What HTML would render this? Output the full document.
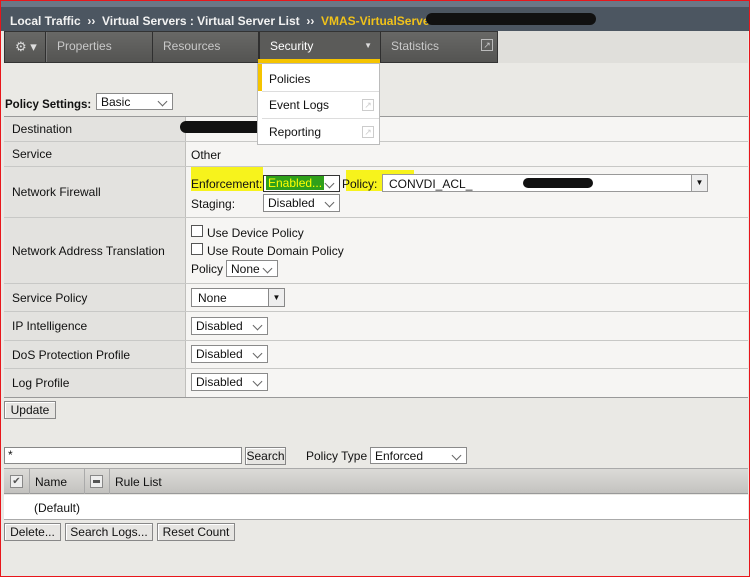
<!DOCTYPE html>
<html><head><style>
*{box-sizing:border-box;margin:0;padding:0}
body{width:750px;height:577px;position:relative;overflow:hidden;background:#eae9e5;font-family:"Liberation Sans",Arial,sans-serif;font-size:12px;color:#111}
.a{position:absolute;white-space:nowrap}
.frame{left:0;top:0;width:750px;height:577px;border:1px solid #e8161b;z-index:50;pointer-events:none}
.hdr{left:1px;top:0;width:748px;height:31px;background:#4c5661;border-top:7px solid #6b7786}
.hdr .t{position:absolute;left:9px;top:7px;font-weight:bold;font-size:12px;color:#f2f2f2;white-space:nowrap}
.nav{left:4px;top:31px;width:494px;height:32px;background:linear-gradient(#686866,#545452);border:1px solid #333}
.tab{position:absolute;top:0;height:30px;border-right:1px solid #2f2f2f;color:#c9c9c9;font-size:12px;padding:7px 0 0 10px;white-space:nowrap}
.sel{position:absolute;height:20px;border:1px solid #8a8a8a;background:#fff;font-size:12px;padding:2px 4px;white-space:nowrap}
.sel:after{content:"";position:absolute;right:6px;top:4px;width:6px;height:6px;border-right:1px solid #666;border-bottom:1px solid #666;transform:rotate(45deg)}
.row{position:absolute;left:4px;width:744px;border-bottom:1px solid #c8c8c6}
.lab{position:absolute;left:0;top:0;bottom:0;width:182px;background:#e3e2df;border-right:1px solid #c0bfbc;padding-left:8px;display:flex;align-items:center}
.val{position:absolute;left:182px;right:0;top:0;bottom:0;background:#f6f5f3}
.btn{position:absolute;height:18px;border:1px solid #888;background:#e6e5e2;font-size:12px;padding:1px 5px;box-shadow:inset 1px 1px #fff;white-space:nowrap;text-align:center}
.cb{position:absolute;width:12px;height:12px;border:1px solid #555;background:#fff}
</style></head><body>
<div class="a frame"></div>
<div class="a hdr"><span class="t">Local Traffic &nbsp;›› &nbsp;Virtual Servers : Virtual Server List &nbsp;›› &nbsp;<span style="color:#f0c21a">VMAS-VirtualServe</span></span>
<div class="a" style="left:425px;top:6px;width:170px;height:12px;background:#111;border-radius:10px"></div></div>
<div class="a" style="left:498px;top:31px;width:250px;height:32px;background:#e0dfdb"></div>
<div class="a nav">
<div class="tab" style="left:0;width:41px;color:#ddd;font-size:13px">⚙ ▾</div>
<div class="tab" style="left:41px;width:107px;border-left:1px solid #777">Properties</div>
<div class="tab" style="left:148px;width:106px">Resources</div>
<div class="tab" style="left:254px;width:122px;color:#fff;background:#5b5b59;border-left:1px solid #2f2f2f">Security<span style="position:absolute;right:8px;top:9px;font-size:8px;color:#ddd">▼</span></div>
<div class="tab" style="left:376px;width:118px;border-right:0">Statistics<span style="position:absolute;right:6px;top:7px;width:12px;height:12px;border:1px solid #bbb;font-size:9px;line-height:10px;text-align:center">↗</span></div>
</div>
<div class="a" style="left:258px;top:59px;width:122px;height:4px;background:#f5c400"></div>
<div class="a" style="left:257px;top:63px;width:123px;height:82px;background:#fff;border:1px solid #bbb;z-index:5">
<div class="a" style="left:0;top:0;width:4px;height:27px;background:#f5c400"></div>
<div class="a" style="left:11px;top:8px">Policies</div>
<div class="a" style="left:4px;top:27px;width:117px;border-top:1px solid #ddd"></div>
<div class="a" style="left:11px;top:34px">Event Logs</div>
<div class="a" style="left:4px;top:54px;width:117px;border-top:1px solid #ddd"></div>
<div class="a" style="left:11px;top:61px">Reporting</div>
<div class="a" style="left:104px;top:35px;width:12px;height:12px;border:1px solid #ccc;color:#ccc;font-size:9px;text-align:center">↗</div>
<div class="a" style="left:104px;top:62px;width:12px;height:12px;border:1px solid #ccc;color:#ccc;font-size:9px;text-align:center">↗</div>
</div>
<div class="a" style="left:5px;top:99px;font-weight:bold;font-size:11.5px">Policy Settings:</div>
<div class="sel" style="left:96px;top:93px;width:77px;height:17px;padding-top:1px">Basic</div>
<div class="a" style="left:4px;top:116px;width:744px;border-top:1px solid #999"></div>
<div class="row" style="top:117px;height:25px"><div class="lab">Destination</div><div class="val"></div></div>
<div class="a" style="left:180px;top:121px;width:90px;height:12px;background:#111;border-radius:8px"></div>
<div class="row" style="top:142px;height:25px"><div class="lab">Service</div><div class="val"><span class="a" style="left:5px;top:6px">Other</span></div></div>
<div class="row" style="top:167px;height:51px"><div class="lab">Network Firewall</div><div class="val">
<div class="a" style="left:5px;top:0;width:72px;height:24px;background:#f7f31c"></div>
<div class="a" style="left:160px;top:3px;width:68px;height:21px;background:#f7f31c"></div>
<span class="a" style="left:5px;top:10px">Enforcement:</span>
<div class="sel" style="left:77px;top:8px;width:77px;height:17px;padding:0 2px;border-color:#333"><span style="background:#2fa01a;color:#ff0;padding:0 2px">Enabled...</span></div>
<span class="a" style="left:156px;top:10px">Policy:</span>
<div class="a" style="left:196px;top:7px;width:326px;height:18px;background:#fff;border:1px solid #999;padding:2px 6px">CONVDI_ACL_
<div class="a" style="left:140px;top:3px;width:70px;height:10px;background:#111;border-radius:6px"></div>
<div class="a" style="right:0;top:0;width:16px;height:16px;border-left:1px solid #999;background:#eee;font-size:8px;text-align:center;line-height:16px">▼</div></div>
<span class="a" style="left:5px;top:30px">Staging:</span>
<div class="sel" style="left:77px;top:27px;width:77px;height:18px;padding-top:1px">Disabled</div>
</div></div>
<div class="row" style="top:218px;height:66px"><div class="lab">Network Address Translation</div><div class="val">
<div class="cb" style="left:5px;top:7px"></div><span class="a" style="left:21px;top:8px">Use Device Policy</span>
<div class="cb" style="left:5px;top:25px"></div><span class="a" style="left:21px;top:26px">Use Route Domain Policy</span>
<span class="a" style="left:5px;top:44px">Policy</span>
<div class="sel" style="left:40px;top:42px;width:52px;height:17px;padding-top:1px">None</div>
</div></div>
<div class="row" style="top:284px;height:28px"><div class="lab">Service Policy</div><div class="val">
<div class="a" style="left:5px;top:4px;width:94px;height:19px;background:#fff;border:1px solid #888;padding:2px 6px">None<div class="a" style="right:0;top:0;width:16px;height:17px;border-left:1px solid #888;background:#eee;font-size:8px;text-align:center;line-height:17px">▼</div></div></div></div>
<div class="row" style="top:312px;height:29px"><div class="lab">IP Intelligence</div><div class="val"><div class="sel" style="left:5px;top:5px;width:77px;height:18px;padding-top:1px">Disabled</div></div></div>
<div class="row" style="top:341px;height:28px"><div class="lab">DoS Protection Profile</div><div class="val"><div class="sel" style="left:5px;top:4px;width:77px;height:18px;padding-top:1px">Disabled</div></div></div>
<div class="row" style="top:369px;height:29px;border-bottom:1px solid #999"><div class="lab">Log Profile</div><div class="val"><div class="sel" style="left:5px;top:4px;width:77px;height:18px;padding-top:1px">Disabled</div></div></div>
<div class="btn" style="left:4px;top:401px;width:52px;padding:1px 0">Update</div>
<div class="a" style="left:4px;top:447px;width:238px;height:17px;background:#fff;border:1px solid #888;padding:0 3px">*</div>
<div class="btn" style="left:245px;top:447px;width:41px;padding:1px 0">Search</div>
<span class="a" style="left:306px;top:449px">Policy Type</span>
<div class="sel" style="left:370px;top:447px;width:97px;height:17px;padding-top:1px">Enforced</div>
<div class="a" style="left:4px;top:468px;width:744px;height:26px;background:linear-gradient(#dcdbd8,#c3c2bf);border-top:1px solid #aaa;border-bottom:1px solid #999">
<div class="a" style="left:25px;top:0;height:25px;border-left:1px solid #aaa"></div>
<div class="a" style="left:80px;top:0;height:25px;border-left:1px solid #aaa"></div>
<div class="a" style="left:105px;top:0;height:25px;border-left:1px solid #aaa"></div>
<div class="a" style="left:6px;top:6px;width:13px;height:13px;border:1px solid #888;background:#eee;font-size:10px;line-height:11px;text-align:center;color:#555">✔</div>
<div class="a" style="left:86px;top:6px;width:13px;height:13px;border:1px solid #888;background:#eee"><div class="a" style="left:2px;top:4px;width:7px;height:3px;background:#555"></div></div>
<span class="a" style="left:31px;top:6px">Name</span><span class="a" style="left:111px;top:6px">Rule List</span></div>
<div class="a" style="left:4px;top:495px;width:744px;height:25px;background:#fff;border-bottom:1px solid #aaa"><span class="a" style="left:30px;top:6px">(Default)</span></div>
<div class="btn" style="left:4px;top:523px;width:57px;padding:1px 0">Delete...</div>
<div class="btn" style="left:65px;top:523px;width:88px;padding:1px 0">Search Logs...</div>
<div class="btn" style="left:157px;top:523px;width:78px;padding:1px 0">Reset Count</div>
</body></html>
